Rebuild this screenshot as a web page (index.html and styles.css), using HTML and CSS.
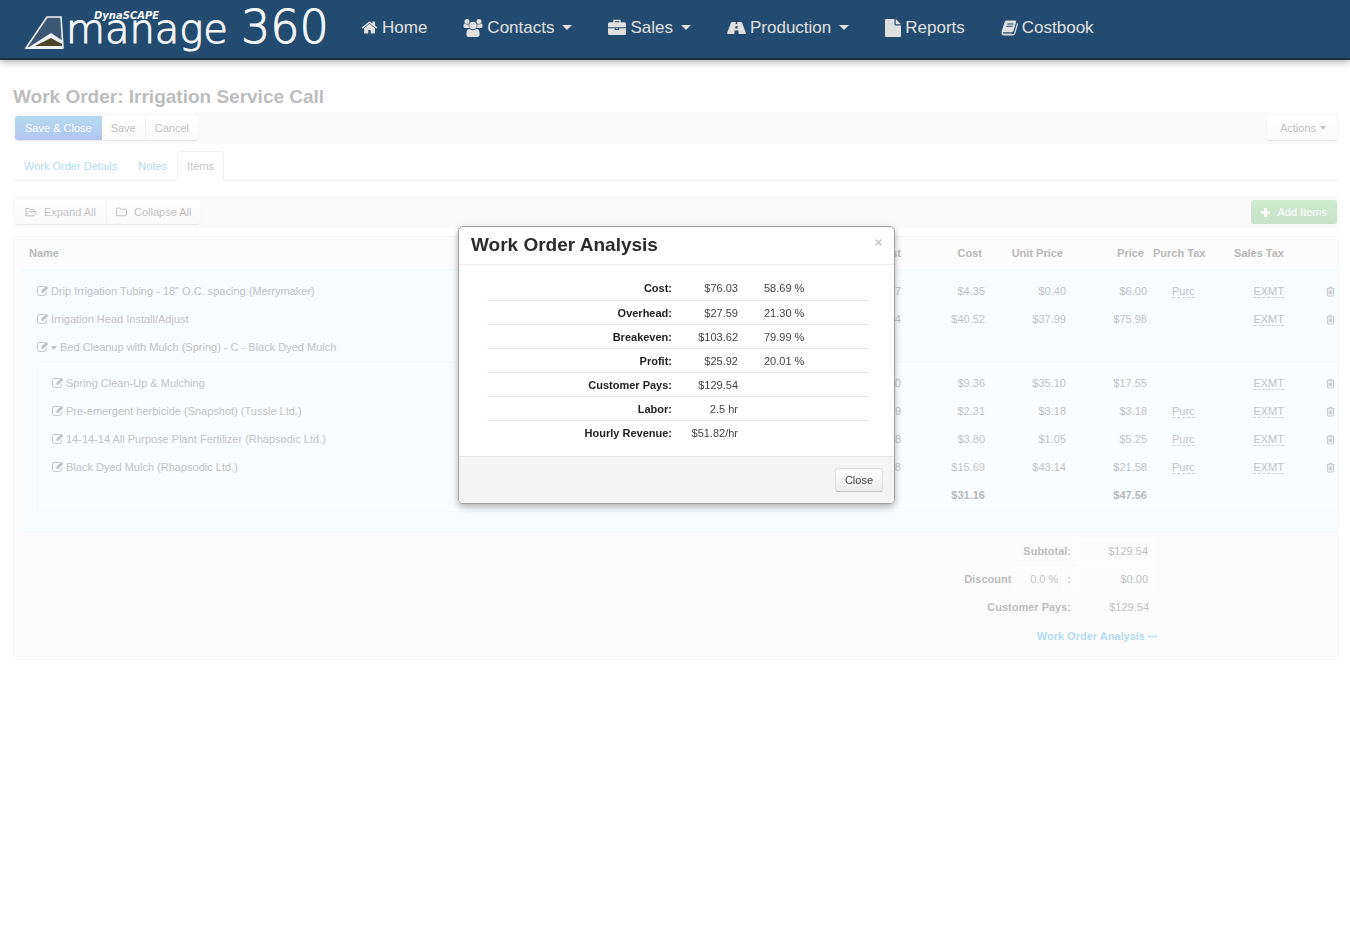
FILE: index.html
```html
<!DOCTYPE html>
<html lang="en">
<head>
<meta charset="utf-8">
<title>Work Order: Irrigation Service Call</title>
<link rel="stylesheet" href="styles.css">
</head>
<body>
<svg class="defs" width="0" height="0" aria-hidden="true">
  <symbol id="i-edit" viewBox="0 0 12 11"><path d="M9.200 6.600v2a1.800 1.800 0 0 1-1.800 1.800H2.300A1.800 1.800 0 0 1 .5 8.600V3.300A1.800 1.800 0 0 1 2.300 1.500h5.200" fill="none" stroke="currentColor"/><path d="M4.300 7.800V5.800L9.400.700l2 2-5.100 5.100z" fill="currentColor"/></symbol>
  <symbol id="i-trash" viewBox="0 0 10 11"><path d="M.5 2.500h9M3.200 2.300l.6-1.700h2.400l.6 1.700M1.600 2.800v6.500q0 1.200 1 1.200h4.800q1 0 1-1.200V2.800M3.500 4.300v4.500M5 4.300v4.500M6.500 4.300v4.500" fill="none" stroke="currentColor"/></symbol>
</svg>

<header class="navbar">
  <a class="brand" href="#" aria-label="DynaSCAPE manage360">
    <svg width="318" height="52" viewBox="0 0 318 52">
      <path d="M26 12h14l2 31H5z" fill="#3d5673" stroke="#eef2f5" stroke-width="1.600"/>
      <path d="M5 44l25-16 12 8v8z" fill="#eef2f5"/>
      <path d="M14 41l16-8 11 6v2z" fill="#4a4428"/>
      <text class="logo-small" x="73" y="14">DynaSCAPE</text>
      <text class="logo-main" x="45" y="38">manage</text>
      <text class="logo-num" x="220" y="38">360</text>
    </svg>
  </a>
  <nav class="nav">
    <a href="#"><svg width="17" height="17" viewBox="0 0 1792 1792"><path fill="currentColor" d="M1472 992v480q0 26-19 45t-45 19h-384v-384h-256v384h-384q-26 0-45-19t-19-45v-480q0-1 .5-3t.5-3l575-474 575 474q1 2 1 6zm223-69l-62 74q-8 9-21 11h-3q-13 0-21-7l-692-577-692 577q-12 8-24 7-13-2-21-11l-62-74q-8-10-7-23.500t11-21.500l719-599q32-26 76-26t76 26l244 204v-195q0-14 9-23t23-9h192q14 0 23 9t9 23v408l219 182q10 8 11 21.500t-7 23.500z"/></svg>Home</a>
    <a href="#"><svg width="20" height="18" viewBox="0 0 20 18"><g fill="currentColor"><circle cx="4" cy="2.600" r="2.500"/><circle cx="16" cy="2.600" r="2.500"/><path d="M.5 6.500q0-2 1.200-2 1 1 2.500 1l1.500-.3q-.5 2.300.8 3.800H2Q.5 9 .5 7.700zM19.500 6.500q0-2-1.200-2-1 1-2.500 1l-1.500-.3q.5 2.300-.8 3.800H18q1.500 0 1.500-1.300z"/><circle cx="10" cy="6.500" r="3.800"/><path d="M6.400 9.800Q8 11.200 10 11.200t3.600-1.400Q16.600 10 16.600 15q0 3-2.400 3H5.800q-2.400 0-2.400-3 0-5 3-5.200z"/></g></svg>Contacts<i class="caret"></i></a>
    <a href="#"><svg width="18" height="17" viewBox="0 0 18 17"><path d="M6 4V1.500h6V4" fill="none" stroke="currentColor" stroke-width="1.500"/><path d="M0 8.300V4.800Q0 3.300 1.500 3.300h15Q18 3.300 18 4.800v3.500zM0 9.300h6.800V11h4.400V9.300H18v5.200q0 1.500-1.500 1.500h-15Q0 16 0 14.500zM7.800 9.300h2.400v.8H7.800z" fill="currentColor"/></svg>Sales<i class="caret"></i></a>
    <a href="#"><svg width="19" height="14" viewBox="0 0 19 14"><path fill="currentColor" fill-rule="evenodd" d="M4.800 1h4L8.600 3h1.800L10.200 1h4q.5 0 .8.600l3.800 10.200q.3 1.200-.6 1.200h-6.500l-.3-3.500H7.600L7.300 13H.800q-.9 0-.6-1.200L4 1.600Q4.300 1 4.800 1zM8.500 5l-.2 2.500h2.400L10.500 5z"/></svg>Production<i class="caret"></i></a>
    <a href="#"><svg width="16" height="18" viewBox="0 0 16 18"><path fill="currentColor" d="M0 1q0-1 1-1h8.500v5.500q0 1 1 1H16V17q0 1-1 1H1q-1 0-1-1zM10.700.200q.5.200.9.600l3.600 3.600q.4.400.6.900h-5.100z"/></svg>Reports</a>
    <a href="#"><svg width="17" height="16" viewBox="0 0 17 16"><path d="M15.800 3.500q.7.500.4 1.500l-2.600 8.500q-.5 1.400-1.900 1.400H3Q1.300 14.900.9 13.300" fill="none" stroke="currentColor" stroke-width="1.200"/><path fill="currentColor" fill-rule="evenodd" d="M5.800.500h8.300q1.500 0 1 1.600l-2.600 8.700q-.4 1.400-1.800 1.400H2.600q-1.200 0-.7 1.200h9.500l-.3 1H2.500Q.200 14 .700 11.500L3.600 2Q4.200.500 5.800.500zM6.300 3.400L6 4.400h6.300l.3-1zM5.600 5.700l-.3 1h6.300l.3-1z"/></svg>Costbook</a>
  </nav>
</header>

<main class="page">
  <h1>Work Order: Irrigation Service Call</h1>
  <div class="toolbar">
    <div class="btn-group">
      <button class="btn primary">Save &amp; Close</button><button class="btn plain">Save</button><button class="btn plain">Cancel</button>
    </div>
    <button class="btn actions">Actions<i class="caret small"></i></button>
  </div>

  <nav class="tabs">
    <a href="#">Work Order Details</a>
    <a href="#">Notes</a>
    <a href="#" class="active" aria-current="page">Items</a>
  </nav>

  <div class="toolbar">
    <div class="btn-group">
      <button class="btn"><svg width="12" height="10" viewBox="0 0 12 10"><path d="M1 8.500V1.500h3l1 1.200h4v2M1 8.800L3.200 4.700h8L9 8.800z" fill="none" stroke="currentColor" stroke-linejoin="round"/></svg>Expand All</button><button class="btn plain"><svg width="11" height="10" viewBox="0 0 11 10"><path d="M.600 1.500q0-.5.600-.5h2.500l1 1.300h5q.7 0 .7.700v5q0 .700-.7.700H1.300q-.7 0-.7-.7z" fill="none" stroke="currentColor"/></svg>Collapse All</button>
    </div>
    <button class="btn add"><svg width="9" height="9" viewBox="0 0 9 9"><path d="M4.500 0v9M0 4.500h9" stroke="currentColor" stroke-width="2.600"/></svg>Add Items</button>
  </div>

  <section class="panel">
    <table class="items">
      <colgroup><col><col class="w-unit"><col class="w-num"><col class="w-num"><col class="w-num"><col class="w-num"><col class="w-sales"><col class="w-del"></colgroup>
      <thead>
        <tr><th class="name">Name</th><th>Unit Cost</th><th>Cost</th><th>Unit Price</th><th>Price</th><th class="purch">Purch Tax</th><th class="sales">Sales Tax</th><th></th></tr>
      </thead>
      <tbody class="top">
        <tr class="pad"><td colspan="8"></td></tr>
        <tr><td class="name"><svg class="edit"><use href="#i-edit"/></svg>Drip Irrigation Tubing - 18" O.C. spacing (Merrymaker)</td><td><input aria-label="Unit cost" value="$0.27"></td><td>$4.35</td><td>$0.40</td><td>$6.00</td><td class="purch"><a href="#">Purc</a></td><td><a href="#">EXMT</a></td><td><button class="del" aria-label="Delete"><svg><use href="#i-trash"/></svg></button></td></tr>
        <tr><td class="name"><svg class="edit"><use href="#i-edit"/></svg>Irrigation Head Install/Adjust</td><td><input aria-label="Unit cost" value="$19.34"></td><td>$40.52</td><td>$37.99</td><td>$75.98</td><td></td><td><a href="#">EXMT</a></td><td><button class="del" aria-label="Delete"><svg><use href="#i-trash"/></svg></button></td></tr>
        <tr><td class="name" colspan="8"><svg class="edit"><use href="#i-edit"/></svg><i class="caret small lead"></i>Bed Cleanup with Mulch (Spring) - C - Black Dyed Mulch</td></tr>
        <tr><td class="nest" colspan="8">
          <div class="nested">
          <table class="items">
            <colgroup><col><col class="w-unit"><col class="w-num"><col class="w-num"><col class="w-num"><col class="w-num"><col class="w-sales"><col class="w-del"></colgroup>
            <tbody>
              <tr><td class="name"><svg class="edit"><use href="#i-edit"/></svg>Spring Clean-Up &amp; Mulching</td><td><input aria-label="Unit cost" value="$18.00"></td><td>$9.36</td><td>$35.10</td><td>$17.55</td><td></td><td><a href="#">EXMT</a></td><td><button class="del" aria-label="Delete"><svg><use href="#i-trash"/></svg></button></td></tr>
              <tr><td class="name"><svg class="edit"><use href="#i-edit"/></svg>Pre-emergent herbicide (Snapshot) (Tussle Ltd.)</td><td><input aria-label="Unit cost" value="$2.09"></td><td>$2.31</td><td>$3.18</td><td>$3.18</td><td class="purch"><a href="#">Purc</a></td><td><a href="#">EXMT</a></td><td><button class="del" aria-label="Delete"><svg><use href="#i-trash"/></svg></button></td></tr>
              <tr><td class="name"><svg class="edit"><use href="#i-edit"/></svg>14-14-14 All Purpose Plant Fertilizer (Rhapsodic Ltd.)</td><td><input aria-label="Unit cost" value="$0.68"></td><td>$3.80</td><td>$1.05</td><td>$5.25</td><td class="purch"><a href="#">Purc</a></td><td><a href="#">EXMT</a></td><td><button class="del" aria-label="Delete"><svg><use href="#i-trash"/></svg></button></td></tr>
              <tr><td class="name"><svg class="edit"><use href="#i-edit"/></svg>Black Dyed Mulch (Rhapsodic Ltd.)</td><td><input aria-label="Unit cost" value="$28.38"></td><td>$15.69</td><td>$43.14</td><td>$21.58</td><td class="purch"><a href="#">Purc</a></td><td><a href="#">EXMT</a></td><td><button class="del" aria-label="Delete"><svg><use href="#i-trash"/></svg></button></td></tr>
              <tr class="sum"><td></td><td></td><td>$31.16</td><td></td><td>$47.56</td><td></td><td></td><td></td></tr>
            </tbody>
          </table>
          </div>
        </td></tr>
      </tbody>
    </table>

    <div class="totals">
      <div class="line"><label for="subtotal">Subtotal:</label><input id="subtotal" value="$129.54"></div>
      <div class="line"><label for="pct">Discount</label><input id="pct" class="pct" value="0.0 %"><label for="disc">:</label><input id="disc" value="$0.00"></div>
      <div class="line"><b>Customer Pays:</b><span class="value">$129.54</span></div>
      <a class="analysis" href="#">Work Order Analysis <svg width="9" height="3" viewBox="0 0 9 3"><path d="M0 .500h2.300v2H0zM3.300.500h2.300v2H3.300zM6.600.500h2.300v2H6.600z" fill="currentColor"/></svg></a>
    </div>
  </section>
</main>

<div class="modal" role="dialog" aria-labelledby="modal-title">
  <div class="modal-head">
    <h2 id="modal-title">Work Order Analysis</h2>
    <button class="x" aria-label="Dismiss"><svg width="7" height="7" viewBox="0 0 7 7"><path d="M.7.700l5.600 5.600M6.300.700L.7 6.300" stroke="currentColor" stroke-width="1.800"/></svg></button>
  </div>
  <div class="modal-body">
    <table class="analysis-table">
      <tr><th scope="row">Cost:</th><td>$76.03</td><td class="percent">58.69 %</td></tr>
      <tr><th scope="row">Overhead:</th><td>$27.59</td><td class="percent">21.30 %</td></tr>
      <tr><th scope="row">Breakeven:</th><td>$103.62</td><td class="percent">79.99 %</td></tr>
      <tr><th scope="row">Profit:</th><td>$25.92</td><td class="percent">20.01 %</td></tr>
      <tr><th scope="row">Customer Pays:</th><td>$129.54</td><td class="percent"></td></tr>
      <tr><th scope="row">Labor:</th><td>2.5 hr</td><td class="percent"></td></tr>
      <tr><th scope="row">Hourly Revenue:</th><td>$51.82/hr</td><td class="percent"></td></tr>
    </table>
  </div>
  <div class="modal-foot"><button class="close">Close</button></div>
</div>
</body>
</html>
```

FILE: styles.css
```css
* { box-sizing: border-box; }

body {
  margin: 0;
  background: #fff;
  color: #c2c2c2;
  font: 11px/16px "Liberation Sans", Arial, sans-serif;
}

a { color: inherit; text-decoration: none; }
button, input { font: inherit; color: inherit; }
.defs { position: absolute; }

/* Navigation bar */
.navbar {
  display: flex;
  align-items: flex-start;
  height: 60px;
  padding: 5px 24px 0 21px;
  background: #234b6f;
  border-bottom: 2px solid #1b2f42;
  box-shadow: 0 1px 8px rgba(0, 0, 0, .4);
}
.brand { display: block; width: 340px; }
.brand svg { display: block; overflow: visible; }
.brand text { fill: #f4f6f8; }
.logo-small { font: italic bold 10px "DejaVu Sans", sans-serif; }
.logo-main, .logo-num {
  font-family: "DejaVu Sans Light", "DejaVu Sans", sans-serif;
  font-weight: 200;
  stroke: #f4f6f8;
  stroke-width: 1px;
}
.logo-main { font-size: 40px; }
.logo-num { font-size: 46px; }
.nav { display: flex; gap: 36px; }
.nav a {
  display: flex;
  align-items: center;
  gap: 4px;
  height: 45px;
  color: #e0e0e0;
  font-size: 17px;
}
.caret {
  display: inline-block;
  margin-left: 4px;
  border: 5px solid transparent;
  border-top-color: currentColor;
  border-bottom: 0;
}
.caret.small { border-width: 4px 3px 0; vertical-align: middle; }
.caret.lead { margin: 0 3px 0 0; }

/* Page */
.page { padding: 24px 11px 24px 13px; }
h1 { margin: 0 0 3px; font-size: 19px; line-height: 25px; color: #bdbdbd; }

.toolbar {
  display: flex;
  justify-content: space-between;
  align-items: center;
  height: 32px;
  padding: 0 2px;
  background: #fafafa;
  border-radius: 4px;
}
.btn-group { display: flex; box-shadow: 0 1px 1px #e8e8e8; border-radius: 3px; }
.btn {
  display: inline-flex;
  align-items: center;
  height: 24px;
  padding: 0 10px;
  border: 0;
  border-right: 1px solid #f4f4f4;
  background: linear-gradient(#fff, #fafafa);
}
.btn.plain { padding: 0 9px; }
.btn:last-child { border-right: 0; border-radius: 0 3px 3px 0; }
.btn svg { margin-right: 7px; }
.btn.primary {
  background: linear-gradient(#b3daf0, #b3c5f0);
  color: #fff;
  border: 0;
  border-radius: 3px 0 0 3px;
}
.btn.actions { padding: 0 11px 0 13px; border-radius: 3px; box-shadow: 0 1px 1px #e4e4e4; }
.btn.add {
  border-radius: 3px;
  background: linear-gradient(#cdebcd, #c8e2c8);
  color: #fff;
}

.tabs {
  display: flex;
  align-items: flex-end;
  margin: 7px 0 15px;
  border-bottom: 1px solid #f3f3f3;
}
.tabs a {
  height: 30px;
  margin-bottom: -1px;
  padding: 6px 9px 6px 10px;
  border: 1px solid transparent;
  border-radius: 4px 4px 0 0;
  color: #b3daf0;
}
.tabs a.active { padding: 6px 9px; background: #fff; border-color: #f1f1f1; border-bottom-color: #fff; color: #c6c6c6; }

/* Items */
.panel {
  margin-top: 8px;
  padding-left: 7px;
  border: 1px solid #f6f6f6;
  border-radius: 4px;
  background: #fcfcfc;
}
.items { width: 100%; table-layout: fixed; border-collapse: collapse; }
.items .w-unit { width: 79px; }
.items .w-num { width: 81px; }
.items .w-sales { width: 56px; }
.items .w-del { width: 51px; }
.items th { height: 32px; padding: 0 6px 0 0; text-align: right; color: #b8b8b8; }
.items th.name { padding-left: 8px; text-align: left; }
.items th.purch { padding-left: 3px; text-align: left; }
.items th.sales { padding-right: 3px; }
.items td { height: 28px; padding: 0 3px 0 0; text-align: right; }
.items td.name { padding-left: 16px; text-align: left; }
.items td.purch { padding-left: 22px; text-align: left; }
.items td a { border-bottom: 1px dashed #cfd2d4; }
.top { background: #f7fcff; border-top: 1px solid #f3f8fb; border-bottom: 1px solid #f3f8fb; }
.items .pad td { height: 8px; }
.edit { width: 12px; height: 11px; margin-right: 2px; vertical-align: -1px; }
.del { display: block; margin-left: auto; padding: 0; border: 0; background: none; }
.del svg { display: block; width: 9px; height: 11px; }
.items .nest { padding: 1px 0 20px 16px; }
.nested {
  padding: 6px 0 2px;
  border: 1px solid #f3f9fc;
  border-right: 0;
  background: #fafdff;
}
.nested .items td.name { padding-left: 14px; }
.nested .sum { font-weight: bold; color: #b8b8b8; }
input {
  height: 24px;
  width: 78px;
  padding: 0 5px;
  border: 1px solid #fff;
  background: transparent;
  text-align: right;
}
.items td:has(input) { padding: 0; }
.items input { width: 100%; border-color: #fbfeff; display: block; }

.totals {
  width: 222px;
  margin: 4px 181px 15px auto;
}
.line { display: flex; justify-content: flex-end; align-items: center; height: 28px; gap: 3px; }
.line label, .line b { font-weight: bold; color: #bdbdbd; }
.line input { margin: 0 3px 0 2px; }
.line .pct { width: 50px; margin: 0; }
.line .value { width: 83px; padding-right: 8px; text-align: right; }
.analysis { display: block; margin-top: 7px; text-align: right; font-weight: bold; color: #b3daf0; }
.analysis svg { vertical-align: 2px; }

/* Dialog */
.modal {
  position: fixed;
  top: 226px;
  left: 34%;
  width: 437px;
  margin-left: -1px;
  border: 1px solid #a0a0a0;
  border-radius: 5px;
  background: #fff;
  color: #444;
  box-shadow: 0 3px 7px rgba(0, 0, 0, .3);
  overflow: hidden;
}
.modal-head {
  display: flex;
  justify-content: space-between;
  height: 38px;
  padding: 5px 12px 0 12px;
  border-bottom: 1px solid #eee;
}
h2 { margin: 0; font-size: 19px; line-height: 26px; color: #2b2b2b; }
.x { align-self: flex-start; padding: 7px 0 0; border: 0; background: none; color: #ccc; }
.x svg { display: block; }
.modal-body { padding: 11px 26px 12px 28px; }
.analysis-table { width: 100%; table-layout: fixed; border-collapse: collapse; }
.analysis-table tr + tr { border-top: 1px solid #e6e6e6; }
.analysis-table th { width: 185px; height: 24px; padding: 1px 0 0; text-align: right; color: #222; }
.analysis-table td { width: 66px; padding: 1px 0 0; text-align: right; }
.analysis-table td.percent { width: auto; padding-left: 26px; text-align: left; }
.modal-foot {
  display: flex;
  justify-content: flex-end;
  padding: 11px;
  background: #f4f4f4;
  border-top: 1px solid #e6e6e6;
}
.close {
  height: 24px;
  padding: 0 9px;
  border: 1px solid #ddd;
  border-bottom-color: #bbb;
  border-radius: 3px;
  background: linear-gradient(#fff, #ececec);
  color: #444;
}
```
